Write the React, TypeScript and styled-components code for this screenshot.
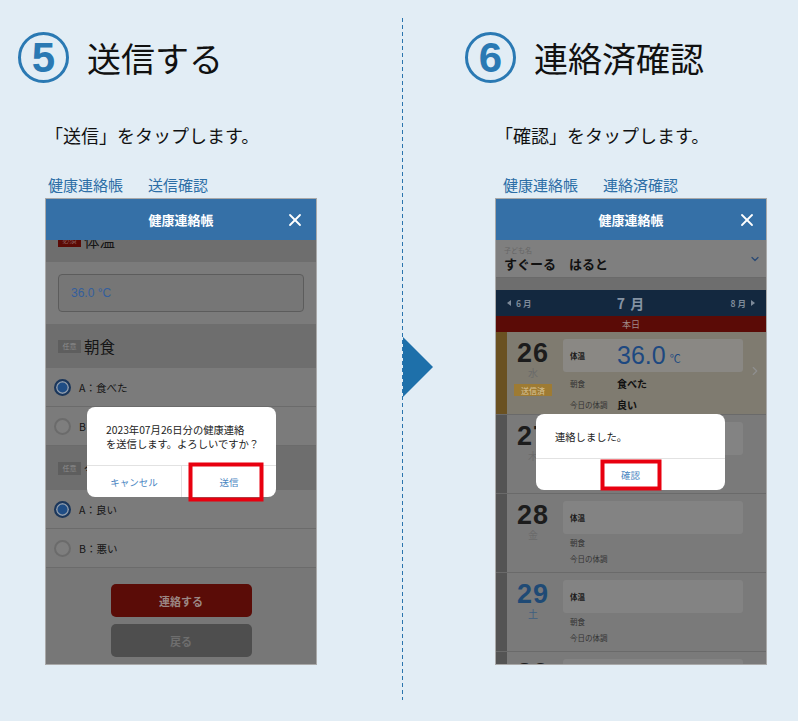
import React from "react";
import styled, { createGlobalStyle } from "styled-components";
import { X, ChevronDown, ChevronRight } from "lucide-react";

const GlobalStyle = createGlobalStyle`
  html, body { margin: 0; padding: 0; background: #e2edf5; }
  body { font-family: "Noto Sans CJK JP", "Noto Sans", sans-serif; color: #111; }
  * { box-sizing: border-box; }
`;

const Page = styled.div`
  width: 798px;
  height: 721px;
  display: grid;
  grid-template-columns: 402px 1px 1fr;
  overflow: hidden;
`;

const Column = styled.section<{ $pad: number }>`
  display: flex;
  flex-direction: column;
  align-items: flex-start;
  padding: 32px 0 0 ${(p) => p.$pad}px;
`;

const Heading = styled.div<{ $shift: number }>`
  display: flex;
  align-items: center;
  gap: 18px;
  margin-left: ${(p) => p.$shift}px;
`;

const StepNumber = styled.span`
  width: 51px;
  height: 51px;
  border: 3px solid #2a79b3;
  border-radius: 50%;
  display: flex;
  align-items: center;
  justify-content: center;
  color: #2a79b3;
  font-family: "Liberation Sans", Arial, sans-serif;
  font-weight: 700;
  font-size: 42px;
  line-height: 1;
`;

const Title = styled.h1`
  margin: 0;
  font-size: 34px;
  font-weight: 400;
  line-height: 1;
  color: #111;
`;

const Instruction = styled.p`
  margin: 40px 0 0;
  font-size: 18px;
  line-height: 24px;
  color: #111;
`;

const Crumbs = styled.div<{ $shift: number }>`
  display: flex;
  gap: 25px;
  margin: 28px 0 0 ${(p) => p.$shift}px;
  font-size: 15px;
  line-height: 20px;
  color: #2c6ea6;
`;

const Divider = styled.div`
  position: relative;
  margin: 18px 0 21px;
  background: repeating-linear-gradient(to bottom, #2a74ad 0 4px, transparent 4px 7px);
`;

const Arrow = styled.svg`
  position: absolute;
  left: 1px;
  top: 319px;
`;

/* phone screenshot */

const Phone = styled.div`
  position: relative;
  width: 272px;
  height: 467px;
  margin-top: 3px;
  border: 1px solid #a9a9a9;
  display: flex;
  flex-direction: column;
  overflow: hidden;
  font-family: "Noto Sans CJK JP", "Liberation Sans", sans-serif;
`;

const AppBar = styled.header`
  position: relative;
  z-index: 1;
  flex: none;
  height: 41px;
  background: #3570a7;
  display: flex;
  align-items: center;
  justify-content: center;
  color: #fff;
  font-size: 13px;
  font-weight: 700;
`;

const CloseIcon = styled.span<{ $right: number }>`
  position: absolute;
  right: ${(p) => p.$right}px;
  top: 50%;
  transform: translateY(-50%);
  display: flex;
`;

const Screen = styled.div`
  flex: 1;
  display: flex;
  flex-direction: column;
  overflow: hidden;
  background: #777;
`;

/* form screen (left) */

const SectionHead = styled.div<{ $first?: boolean }>`
  flex: none;
  height: 44px;
  margin-top: ${(p) => (p.$first ? -22 : 0)}px;
  background: #6e6e6e;
  display: flex;
  align-items: center;
  gap: 3px;
  padding-left: 12px;
  font-size: 15.5px;
  color: #151515;
`;

const Badge = styled.span<{ $required?: boolean }>`
  width: 23px;
  height: 13px;
  display: flex;
  align-items: center;
  justify-content: center;
  font-size: 7px;
  background: ${(p) => (p.$required ? "#5b0a05" : "#5e5e5e")};
  color: ${(p) => (p.$required ? "#8a5a57" : "#8c8c8c")};
`;

const FieldWrap = styled.div`
  flex: none;
  padding: 12px;
  background: #7b7b7b;
`;

const TextBox = styled.div`
  height: 38px;
  border: 1px solid #5c5c5c;
  border-radius: 4px;
  background: #767676;
  display: flex;
  align-items: center;
  padding-left: 12px;
  font-family: "Liberation Sans", Arial, sans-serif;
  font-size: 12px;
  color: #345e9c;
`;

const Option = styled.div`
  flex: none;
  height: 39px;
  display: flex;
  align-items: center;
  gap: 8px;
  padding-left: 8px;
  background: #7b7b7b;
  border-bottom: 1px solid #6b6b6b;
  font-size: 10.5px;
  color: #151515;
`;

const Radio = styled.span<{ $checked?: boolean }>`
  width: 17px;
  height: 17px;
  border-radius: 50%;
  border: 2px solid ${(p) => (p.$checked ? "#1b365a" : "#6b6b6b")};
  background: ${(p) => (p.$checked ? "#1f4d85" : "#7e7e7e")};
  box-shadow: ${(p) => (p.$checked ? "inset 0 0 0 1.5px #8f9aa8" : "none")};
`;

const ActionArea = styled.div`
  flex: 1;
  display: flex;
  flex-direction: column;
  align-items: center;
  gap: 7px;
  padding-top: 16px;
  background: #777;
`;

const ActionButton = styled.div<{ $primary?: boolean }>`
  width: 141px;
  height: 33px;
  border-radius: 5px;
  display: flex;
  align-items: center;
  justify-content: center;
  font-size: 11px;
  font-weight: 700;
  background: ${(p) => (p.$primary ? "#5a0c07" : "#4e4e4e")};
  color: ${(p) => (p.$primary ? "#9b8784" : "#6e6e6e")};
`;

/* calendar screen (right) */

const NameField = styled.div`
  flex: none;
  position: relative;
  height: 38px;
  padding: 6px 0 0 8px;
  background: #7f7f7f;
  border-bottom: 1px solid #6a6a6a;
`;

const FieldLabel = styled.div`
  font-size: 7px;
  line-height: 9px;
  color: #666;
`;

const ChildName = styled.div`
  font-size: 13px;
  font-weight: 700;
  line-height: 18px;
  color: #111;
`;

const FieldChevron = styled.span`
  position: absolute;
  right: 5px;
  top: 13px;
  display: flex;
`;

const Spacer = styled.div`
  flex: none;
  height: 12px;
  background: #6e6e6e;
`;

const MonthBar = styled.div`
  flex: none;
  height: 26px;
  background: #13283f;
  display: flex;
  align-items: center;
  justify-content: space-between;
  padding: 0 11px;
  color: #7d8a99;
  font-size: 8.5px;
  font-weight: 700;
`;

const MonthLink = styled.span`
  display: flex;
  align-items: center;
  gap: 5px;
`;

const Tri = styled.span<{ $dir: "left" | "right" }>`
  width: 0;
  height: 0;
  border-top: 3px solid transparent;
  border-bottom: 3px solid transparent;
  ${(p) =>
    p.$dir === "left"
      ? "border-right: 4px solid #7d8a99;"
      : "border-left: 4px solid #7d8a99;"}
`;

const CurrentMonth = styled.span`
  font-size: 14px;
  letter-spacing: 1px;
  color: #8593a3;
`;

const TodayBar = styled.div`
  flex: none;
  height: 16px;
  background: #5b0b06;
  display: flex;
  align-items: center;
  justify-content: center;
  font-size: 9px;
  color: #a08a88;
`;

const DayRow = styled.div<{ $height: number; $today?: boolean }>`
  flex: none;
  height: ${(p) => p.$height}px;
  display: flex;
  background: ${(p) => (p.$today ? "#7f7b70" : "#7a7a7a")};
  border-bottom: 1px solid #6a6a6a;
`;

const Stripe = styled.div<{ $today?: boolean }>`
  flex: none;
  width: 11px;
  background: ${(p) => (p.$today ? "#6a5121" : "#545454")};
`;

const DateCol = styled.div`
  flex: none;
  width: 52px;
  display: flex;
  flex-direction: column;
  align-items: center;
  padding-top: 7px;
`;

const DayNum = styled.div<{ $color: string }>`
  font-family: "Liberation Sans", Arial, sans-serif;
  font-weight: 700;
  font-size: 27px;
  line-height: 28px;
  letter-spacing: 1px;
  color: ${(p) => p.$color};
`;

const Weekday = styled.div<{ $color: string }>`
  font-size: 10px;
  line-height: 12px;
  color: ${(p) => p.$color};
`;

const SentBadge = styled.div`
  margin-top: 5px;
  width: 38px;
  height: 12px;
  background: #9e7b33;
  color: #d9c49a;
  font-size: 8px;
  display: flex;
  align-items: center;
  justify-content: center;
`;

const Card = styled.div`
  flex: none;
  width: 180px;
  margin-left: 4px;
  padding-top: 7px;
`;

const TempBox = styled.div<{ $today?: boolean }>`
  height: 33px;
  border-radius: 3px;
  background: ${(p) => (p.$today ? "#8a8884" : "#838383")};
  display: flex;
  align-items: center;
  padding-left: 7px;
`;

const InfoLabel = styled.span`
  display: inline-block;
  width: 47px;
  font-size: 7.5px;
  color: #333;
`;

const TempLabel = styled(InfoLabel)`
  font-weight: 700;
  color: #1a1a1a;
`;

const TempValue = styled.span`
  font-family: "Liberation Sans", Arial, sans-serif;
  font-size: 25px;
  color: #1d4880;
`;

const TempUnit = styled.span`
  margin-left: 4px;
  font-size: 11px;
  color: #1d4880;
  align-self: center;
  padding-top: 4px;
`;

const InfoLine = styled.div<{ $tall?: boolean }>`
  display: flex;
  align-items: center;
  height: ${(p) => (p.$tall ? 19 : 16)}px;
  padding-left: 7px;
  margin-top: ${(p) => (p.$tall ? 2 : 0)}px;
  &:first-of-type {
    margin-top: ${(p) => (p.$tall ? 2 : 4)}px;
  }
`;

const InfoValue = styled.span`
  font-size: 10px;
  font-weight: 700;
  color: #111;
`;

const RowChevron = styled.span`
  flex: 1;
  display: flex;
  align-items: center;
  justify-content: center;
  padding-bottom: 4px;
`;

/* dialogs */

const Dialog = styled.div<{ $top: number; $left: number }>`
  position: absolute;
  z-index: 2;
  top: ${(p) => p.$top}px;
  left: ${(p) => p.$left}px;
  width: 189px;
  background: #fff;
  border-radius: 8px;
  display: flex;
  flex-direction: column;
`;

const Message = styled.div<{ $height: number }>`
  height: ${(p) => p.$height}px;
  padding: 16px 0 0 19px;
  font-size: 10.3px;
  line-height: 14px;
  color: #222;
  white-space: pre;
`;

const DialogActions = styled.div`
  height: 32px;
  display: flex;
  border-top: 1px solid #e2e2e2;
`;

const DialogButton = styled.div`
  position: relative;
  flex: 1;
  display: flex;
  align-items: center;
  justify-content: center;
  font-size: 9.5px;
  color: #4a86c2;
  & + & {
    border-left: 1px solid #e2e2e2;
  }
`;

const Highlight = styled.span<{ $w: number; $h: number; $dx?: number }>`
  position: absolute;
  left: 50%;
  top: 50%;
  width: ${(p) => p.$w}px;
  height: ${(p) => p.$h}px;
  transform: translate(calc(-50% + ${(p) => p.$dx ?? 0}px), -50%);
  border: 4px solid #e8000f;
`;

type Day = {
  num: string;
  wd: string;
  numColor: string;
  wdColor: string;
  height: number;
};

const days: Day[] = [
  { num: "27", wd: "木", numColor: "#1c1c1c", wdColor: "#6a6a6a", height: 79 },
  { num: "28", wd: "金", numColor: "#1c1c1c", wdColor: "#6a6a6a", height: 79 },
  { num: "29", wd: "土", numColor: "#1f4a75", wdColor: "#3f5f80", height: 79 },
  { num: "30", wd: "日", numColor: "#1c1c1c", wdColor: "#6a6a6a", height: 79 },
];

const FormScreen = () => (
  <Phone>
    <AppBar>
      健康連絡帳
      <CloseIcon $right={11}>
        <X size={20} strokeWidth={2.2} color="#fff" />
      </CloseIcon>
    </AppBar>
    <Screen>
      <SectionHead $first>
        <Badge $required>必須</Badge>
        体温
      </SectionHead>
      <FieldWrap>
        <TextBox>36.0 °C</TextBox>
      </FieldWrap>
      <SectionHead>
        <Badge>任意</Badge>
        朝食
      </SectionHead>
      <Option>
        <Radio $checked />
        A：食べた
      </Option>
      <Option>
        <Radio />
        B：食べていない
      </Option>
      <SectionHead>
        <Badge>任意</Badge>
        今日の体調
      </SectionHead>
      <Option>
        <Radio $checked />
        A：良い
      </Option>
      <Option>
        <Radio />
        B：悪い
      </Option>
      <ActionArea>
        <ActionButton $primary>連絡する</ActionButton>
        <ActionButton>戻る</ActionButton>
      </ActionArea>
    </Screen>
    <Dialog $top={208} $left={41}>
      <Message $height={58}>{"2023年07月26日分の健康連絡\nを送信します。よろしいですか？"}</Message>
      <DialogActions>
        <DialogButton>キャンセル</DialogButton>
        <DialogButton>
          送信
          <Highlight $w={75} $h={39} $dx={-3} />
        </DialogButton>
      </DialogActions>
    </Dialog>
  </Phone>
);

const CalendarScreen = () => (
  <Phone>
    <AppBar>
      健康連絡帳
      <CloseIcon $right={9}>
        <X size={20} strokeWidth={2.2} color="#fff" />
      </CloseIcon>
    </AppBar>
    <Screen>
      <NameField>
        <FieldLabel>子ども名</FieldLabel>
        <ChildName>すぐーる　はると</ChildName>
        <FieldChevron>
          <ChevronDown size={12} strokeWidth={2.5} color="#2a4a75" />
        </FieldChevron>
      </NameField>
      <Spacer />
      <MonthBar>
        <MonthLink>
          <Tri $dir="left" />6 月
        </MonthLink>
        <CurrentMonth>7 月</CurrentMonth>
        <MonthLink>
          8 月<Tri $dir="right" />
        </MonthLink>
      </MonthBar>
      <TodayBar>本日</TodayBar>
      <DayRow $height={83} $today>
        <Stripe $today />
        <DateCol>
          <DayNum $color="#1c1c1c">26</DayNum>
          <Weekday $color="#6a6a6a">水</Weekday>
          <SentBadge>送信済</SentBadge>
        </DateCol>
        <Card>
          <TempBox $today>
            <TempLabel>体温</TempLabel>
            <TempValue>36.0</TempValue>
            <TempUnit>℃</TempUnit>
          </TempBox>
          <InfoLine $tall>
            <InfoLabel>朝食</InfoLabel>
            <InfoValue>食べた</InfoValue>
          </InfoLine>
          <InfoLine $tall>
            <InfoLabel>今日の体調</InfoLabel>
            <InfoValue>良い</InfoValue>
          </InfoLine>
        </Card>
        <RowChevron>
          <ChevronRight size={14} strokeWidth={2} color="#8f8f8f" />
        </RowChevron>
      </DayRow>
      {days.map((d) => (
        <DayRow key={d.num} $height={d.height}>
          <Stripe />
          <DateCol>
            <DayNum $color={d.numColor}>{d.num}</DayNum>
            <Weekday $color={d.wdColor}>{d.wd}</Weekday>
          </DateCol>
          <Card>
            <TempBox>
              <TempLabel>体温</TempLabel>
            </TempBox>
            <InfoLine>
              <InfoLabel>朝食</InfoLabel>
            </InfoLine>
            <InfoLine>
              <InfoLabel>今日の体調</InfoLabel>
            </InfoLine>
          </Card>
        </DayRow>
      ))}
    </Screen>
    <Dialog $top={215} $left={40}>
      <Message $height={44}>連絡しました。</Message>
      <DialogActions>
        <DialogButton>
          確認
          <Highlight $w={61} $h={31} />
        </DialogButton>
      </DialogActions>
    </Dialog>
  </Phone>
);

export default function App() {
  return (
    <>
      <GlobalStyle />
      <Page>
        <Column $pad={45}>
          <Heading $shift={-27}>
            <StepNumber>5</StepNumber>
            <Title>送信する</Title>
          </Heading>
          <Instruction>「送信」をタップします。</Instruction>
          <Crumbs $shift={3}>
            <span>健康連絡帳</span>
            <span>送信確認</span>
          </Crumbs>
          <FormScreen />
        </Column>
        <Divider>
          <Arrow width="30" height="60" viewBox="0 0 30 60">
            <polygon points="0,0 30,30 0,60" fill="#1e70aa" />
          </Arrow>
        </Divider>
        <Column $pad={92}>
          <Heading $shift={-30}>
            <StepNumber>6</StepNumber>
            <Title>連絡済確認</Title>
          </Heading>
          <Instruction>「確認」をタップします。</Instruction>
          <Crumbs $shift={8}>
            <span>健康連絡帳</span>
            <span>連絡済確認</span>
          </Crumbs>
          <CalendarScreen />
        </Column>
      </Page>
    </>
  );
}
